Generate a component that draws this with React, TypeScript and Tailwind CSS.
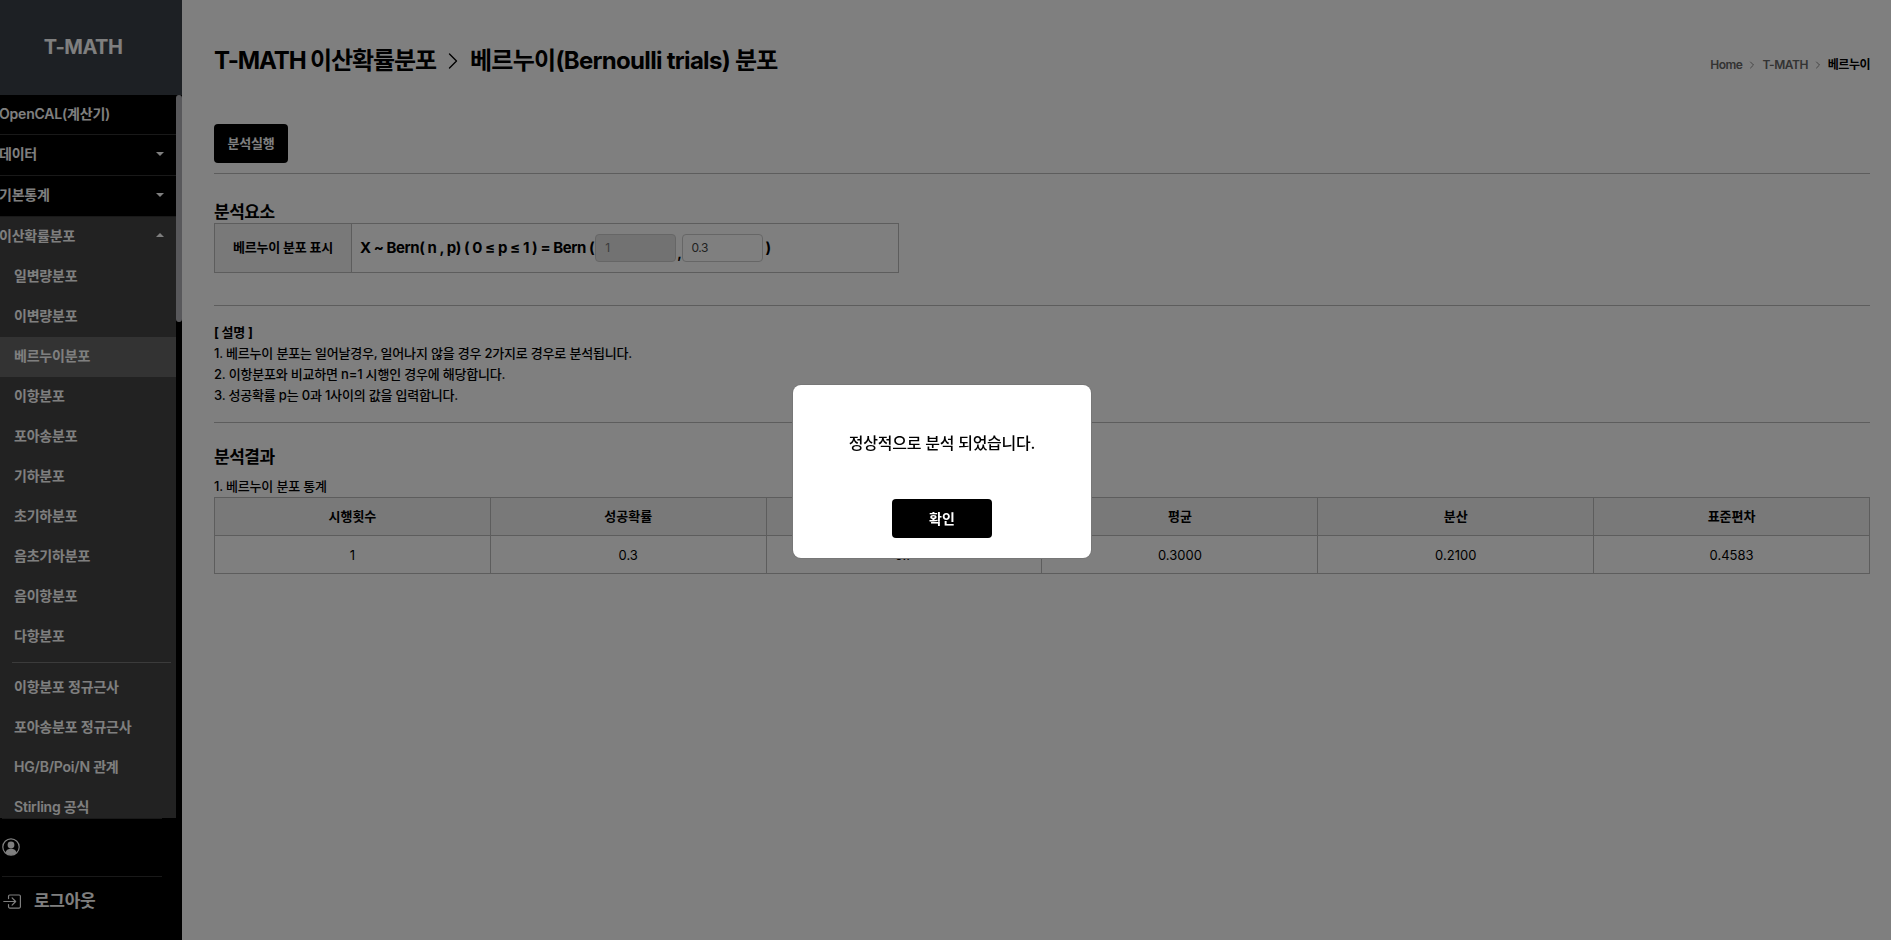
import React from 'react'
import { ChevronRight } from 'lucide-react'
import { BsBoxArrowInRight } from 'react-icons/bs'

const font = { fontFamily: 'Inter, "Noto Sans CJK KR", sans-serif' }

const topItems = [
  { label: 'OpenCAL(계산기)', caret: false, height: 'h-[40px]' },
  { label: '데이터', caret: true, height: 'h-[41px]' },
  { label: '기본통계', caret: true, height: 'h-[41px]' },
]

const subItems = ['일변량분포', '이변량분포', '베르누이분포', '이항분포', '포아송분포', '기하분포', '초기하분포', '음초기하분포', '음이항분포', '다항분포']
const subItems2 = ['이항분포 정규근사', '포아송분포 정규근사', 'HG/B/Poi/N 관계', 'Stirling 공식']

const heads = ['시행횟수', '성공확률', '실패확률', '평균', '분산', '표준편차']
const values = ['1', '0.3', '0.7', '0.3000', '0.2100', '0.4583']

function Caret({ up }: { up?: boolean }) {
  return (
    <span
      className={`mr-[12px] h-0 w-0 border-x-[4px] border-x-transparent ${
        up ? 'border-b-[4px] border-b-white' : 'border-t-[4px] border-t-white'
      }`}
    />
  )
}

function SubLink({ label, active }: { label: string; active?: boolean }) {
  return (
    <div className={`flex h-10 shrink-0 items-center pb-[4px] pl-[14px] text-[14px] font-semibold tracking-[-0.2px] text-white ${active ? 'bg-[#666]' : ''}`}>
      {label}
    </div>
  )
}

function Sidebar() {
  return (
    <aside className="flex h-full w-[182px] shrink-0 flex-col bg-black">
      <div className="flex h-[95px] shrink-0 items-center justify-center bg-[#3a4149] pr-[16px] pb-[2px] text-[20px] font-bold tracking-[-0.5px] text-white">T-MATH</div>
      <div className="flex h-[723px] shrink-0">
        <div className="min-w-0 flex-1 overflow-hidden">
          {topItems.map((item) => (
            <div key={item.label} className={`flex ${item.height} items-center justify-between border-b border-[#333] pb-[3px] text-[14px] font-semibold tracking-[-0.2px] text-white`}>
              <span className="-ml-px">{item.label}</span>
              {item.caret && <Caret />}
            </div>
          ))}
          <div className="bg-[#444]">
            <div className="flex h-10 items-center justify-between pb-[4px] text-[14px] font-semibold tracking-[-0.2px] text-white">
              <span className="-ml-px">이산확률분포</span>
              <Caret up />
            </div>
            {subItems.map((label) => (
              <SubLink key={label} label={label} active={label === '베르누이분포'} />
            ))}
            <div className="mt-[5px] mr-[5px] mb-[5px] ml-3 h-px bg-[#777]" />
            {subItems2.map((label) => (
              <SubLink key={label} label={label} />
            ))}
          </div>
        </div>
        <div className="w-[6px] shrink-0 bg-black">
          <div className="h-[227px] rounded-t-[3px] rounded-b-[3px] bg-[#b0b0b6]" />
        </div>
      </div>
      <div className="ml-[2px] flex h-[59px] w-[160px] items-center border-y border-[#333] pb-[2px] text-white">
        <svg width="18" height="18" viewBox="0 0 18 18" fill="none" aria-hidden="true">
          <circle cx="9" cy="9" r="8.2" stroke="currentColor" strokeWidth="1.2" />
          <circle cx="9" cy="7" r="3.4" fill="currentColor" />
          <path d="M3.4 14.4c1-2.600 3-3.600 5.600-3.600s4.600 1 5.600 3.600A8 8 0 0 1 9 17a8 8 0 0 1-5.600-2.600z" fill="currentColor" />
        </svg>
      </div>
      <div className="flex h-[49px] items-center gap-[13px] pl-[2px] text-[17px] font-semibold tracking-[-0.3px] text-white">
        <BsBoxArrowInRight size={19} />
        <span>로그아웃</span>
      </div>
    </aside>
  )
}

function App() {
  return (
    <div className="relative flex h-[940px] w-full overflow-hidden bg-white text-black" style={font}>
      <Sidebar />
      <main className="min-w-0 flex-1 pl-[32px] pr-[21px]">
        <div className="flex h-[124px] items-start justify-between pt-[44px]">
          <h1 className="flex items-center text-[24px] leading-[34px] font-bold tracking-[-0.7px]">
            <span className="tracking-[-1.1px]">T-MATH 이산확률분포</span>
            <ChevronRight className="mx-[3px]" size={28} strokeWidth={1.2} />
            베르누이(Bernoulli trials) 분포
          </h1>
          <div className="mt-[12px] flex items-center text-[12px] font-semibold tracking-[-0.5px] text-[#666]">
            Home
            <ChevronRight className="mx-[4px]" size={12} strokeWidth={1.5} />
            T-MATH
            <ChevronRight className="mx-[4px]" size={12} strokeWidth={1.5} />
            <span className="text-black">베르누이</span>
          </div>
        </div>
        <button className="h-[39px] w-[74px] rounded-[4px] bg-black text-[13px] font-semibold tracking-[-0.2px] text-white">분석실행</button>
        <hr className="mt-[10px] border-[#bbb]" />
        <h2 className="mt-[27px] text-[17px] leading-[22px] font-semibold tracking-[-0.5px]">분석요소</h2>
        <table className="w-[685px] table-fixed border-collapse border border-[#bbb]">
          <tbody>
            <tr className="h-[49px]">
              <th className="w-[137px] border border-[#bbb] bg-[#f2f2f2] text-[13px] font-semibold tracking-[-0.2px]">베르누이 분포 표시</th>
              <td className="border border-[#bbb] pl-[8px]">
                <div className="flex items-center text-[15px] font-bold tracking-[-0.44px]">
                  X ~ Bern( n , p) ( 0 ≤ p ≤ 1 ) = Bern (
                  <span className="ml-[1px] flex h-[28px] w-[81px] items-center rounded-[4px] border border-[#ccc] bg-[#e4e4e4] pl-[9px] text-[12px] font-normal text-[#777]">1</span>
                  <span className="mx-[1px] self-end text-[14px] leading-[18px]">,</span>
                  <span className="flex h-[28px] w-[81px] items-center rounded-[4px] border border-[#ccc] bg-white pl-[8px] text-[12px] font-normal text-[#444]">0.3</span>
                  <span className="ml-[2px]">)</span>
                </div>
              </td>
            </tr>
          </tbody>
        </table>
        <hr className="mt-[32px] border-[#bbb]" />
        <div className="mt-[16px] text-[13px] leading-[21px] font-medium tracking-[-0.2px]">
          <div className="font-bold">[ 설명 ]</div>
          <div>1. 베르누이 분포는 일어날경우, 일어나지 않을 경우 2가지로 경우로 분석됩니다.</div>
          <div>2. 이항분포와 비교하면 n=1 시행인 경우에 해당합니다.</div>
          <div>3. 성공확률 p는 0과 1사이의 값을 입력합니다.</div>
        </div>
        <hr className="mt-[16px] border-[#bbb]" />
        <h2 className="mt-[22px] text-[17px] leading-[24px] font-semibold tracking-[-0.5px]">분석결과</h2>
        <div className="mt-[7px] text-[13px] leading-[21px] font-medium tracking-[-0.2px]">1. 베르누이 분포 통계</div>
        <table className="w-full table-fixed border-collapse border border-[#bbb] text-[13px]">
          <tbody>
            <tr className="h-[38px] bg-[#f2f2f2]">
              {heads.map((h) => (
                <th key={h} className="border border-[#bbb] font-bold">{h}</th>
              ))}
            </tr>
            <tr className="h-[38px]">
              {values.map((v, i) => (
                <td key={i} className="border border-[#bbb] pt-[2px] text-center">{v}</td>
              ))}
            </tr>
          </tbody>
        </table>
      </main>

      <div className="fixed inset-0 flex items-start justify-center bg-black/50 pt-[385px] pr-[7px]">
        <div className="flex h-[173px] w-[298px] flex-col items-center rounded-[8px] bg-white shadow-[0_0_0_1px_#777]">
          <p className="mt-[46px] text-[16px] leading-[24px] font-medium tracking-[-0.25px]">정상적으로 분석 되었습니다.</p>
          <button className="mt-[44px] h-[39px] w-[100px] rounded-[4px] bg-black text-[14px] font-bold text-white">확인</button>
        </div>
      </div>
    </div>
  )
}

export default App
